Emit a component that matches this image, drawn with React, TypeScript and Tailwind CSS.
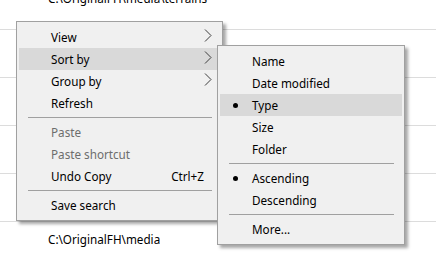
import React from 'react';

type Item =
  | { kind: 'sep' }
  | { kind: 'item'; label: string; sub?: boolean; hot?: boolean; disabled?: boolean; shortcut?: string; checked?: boolean };

const mainItems: Item[] = [
  { kind: 'item', label: 'View', sub: true },
  { kind: 'item', label: 'Sort by', sub: true, hot: true },
  { kind: 'item', label: 'Group by', sub: true },
  { kind: 'item', label: 'Refresh' },
  { kind: 'sep' },
  { kind: 'item', label: 'Paste', disabled: true },
  { kind: 'item', label: 'Paste shortcut', disabled: true },
  { kind: 'item', label: 'Undo Copy', shortcut: 'Ctrl+Z' },
  { kind: 'sep' },
  { kind: 'item', label: 'Save search' },
];

const sortItems: Item[] = [
  { kind: 'item', label: 'Name' },
  { kind: 'item', label: 'Date modified' },
  { kind: 'item', label: 'Type', checked: true, hot: true },
  { kind: 'item', label: 'Size' },
  { kind: 'item', label: 'Folder' },
  { kind: 'sep' },
  { kind: 'item', label: 'Ascending', checked: true },
  { kind: 'item', label: 'Descending' },
  { kind: 'sep' },
  { kind: 'item', label: 'More...' },
];

function Chevron() {
  return (
    <svg width="8" height="13" viewBox="0 0 8 13" className="shrink-0">
      <polyline points="1,0.5 7,6.5 1,12.5" fill="none" stroke="#3c3c3c" strokeWidth="1" />
    </svg>
  );
}

function MenuRows({ items }: { items: Item[] }) {
  return (
    <div className="flex flex-col py-[4px] px-[2px]">
      {items.map((it, i) =>
        it.kind === 'sep' ? (
          <div key={i} className="h-[7px] flex items-center pl-[9px] pr-[8px]">
            <div className="h-px w-full bg-[#a0a0a0]" />
          </div>
        ) : (
          <div
            key={i}
            className={`relative h-[22px] flex items-center pl-[32px] ${it.hot ? 'bg-[#d9d9d9]' : ''} ${
              it.disabled ? 'text-[#6d6d6d]' : 'text-black'
            }`}
          >
            {it.checked && <span className="absolute left-[13px] top-[9px] w-[5px] h-[5px] rounded-full bg-black" />}
            <span className="flex-1 whitespace-nowrap">{it.label}</span>
            {it.shortcut && <span className="pr-[16px] whitespace-nowrap">{it.shortcut}</span>}
            {it.sub && (
              <span className="pr-[8px] flex items-center -mt-[3px]">
                <Chevron />
              </span>
            )}
          </div>
        )
      )}
    </div>
  );
}

export default function App() {
  return (
    <div
      className="relative w-[436px] h-[260px] overflow-hidden bg-white text-[11.7px] leading-[16px] text-black"
      style={{ fontFamily: '"Noto Sans", "Segoe UI", sans-serif' }}
    >
      {/* list view rows behind the menu */}
      <div className="flex flex-col">
        <div className="h-[30px] border-b border-[#dcdcdc] pl-[48px]">
          <div className="-mt-[10px] whitespace-nowrap">C:\OriginalFH\media\terrains</div>
        </div>
        <div className="h-[48px] border-b border-[#dcdcdc]" />
        <div className="h-[48px] border-b border-[#dcdcdc]" />
        <div className="h-[48px] border-b border-[#dcdcdc]" />
        <div className="h-[48px] border-b border-[#dcdcdc]" />
        <div className="pl-[48px] pt-[9px] whitespace-nowrap">C:\OriginalFH\media</div>
      </div>

      {/* context menu */}
      <div className="absolute left-[16px] top-[21px] w-[207px] h-[200px] bg-[#f0f0f0] border border-[#a0a0a0] shadow-[3px_3px_3px_rgba(0,0,0,0.35)]">
        <MenuRows items={mainItems} />
      </div>

      {/* Sort by submenu */}
      <div className="absolute left-[217px] top-[45px] w-[188px] h-[200px] bg-[#f0f0f0] border border-[#a0a0a0] shadow-[3px_3px_3px_rgba(0,0,0,0.35)]">
        <MenuRows items={sortItems} />
      </div>
    </div>
  );
}
